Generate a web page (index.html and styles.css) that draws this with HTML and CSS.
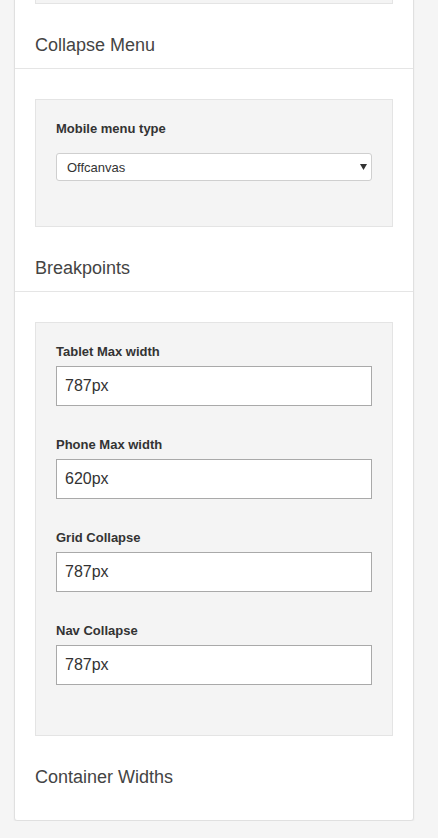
FILE: index.html
```html
<!DOCTYPE html>
<html>
<head>
<meta charset="utf-8">
<link rel="stylesheet" href="styles.css">
</head>
<body>
<div class="card">
  <div class="panel panel-stub"></div>

  <div class="section-title">Collapse Menu</div>
  <div class="panel">
    <div class="group group-select">
      <label class="label">Mobile menu type</label>
      <div class="select">
        <span class="select-text">Offcanvas</span>
        <svg class="caret" width="7" height="6" viewBox="0 0 7 6"><path d="M0 0H7L3.5 6Z" fill="#333"/></svg>
      </div>
    </div>
  </div>

  <div class="section-title">Breakpoints</div>
  <div class="panel">
    <div class="group">
      <label class="label">Tablet Max width</label>
      <div class="input">787px</div>
    </div>
    <div class="group">
      <label class="label">Phone Max width</label>
      <div class="input">620px</div>
    </div>
    <div class="group">
      <label class="label">Grid Collapse</label>
      <div class="input">787px</div>
    </div>
    <div class="group">
      <label class="label">Nav Collapse</label>
      <div class="input">787px</div>
    </div>
  </div>

  <div class="section-title last">Container Widths</div>
</div>
</body>
</html>
```

FILE: styles.css
```css
html, body {
  margin: 0;
  padding: 0;
  background: #f5f5f5;
  font-family: "Liberation Sans", Arial, sans-serif;
  color: #333;
}

.card {
  margin: -30px 0 0 14px;
  width: 400px;
  box-sizing: border-box;
  background: #fff;
  border: 1px solid #e0e0e0;
  border-radius: 3px;
  box-shadow: 0 1px 2px rgba(0, 0, 0, 0.06);
}

.panel {
  margin: 30px 20px 0;
  background: #f4f4f4;
  border: 1px solid #e4e4e4;
  padding: 20px;
}

.panel-stub {
  margin-top: 0;
  padding: 0;
  height: 31px;
}

.section-title {
  padding: 31px 20px 13px;
  font-size: 18px;
  line-height: 20px;
  color: #444;
  border-bottom: 1px solid #e5e5e5;
}

.section-title.last {
  border-bottom: none;
  padding-bottom: 33px;
}

.group {
  margin-bottom: 30px;
}

.label {
  display: block;
  font-size: 13px;
  line-height: 18px;
  font-weight: bold;
  color: #333;
  margin-bottom: 5px;
}

.group-select {
  margin-bottom: 25px;
}

.group-select .label {
  margin-bottom: 15px;
}

.select {
  display: flex;
  align-items: center;
  justify-content: space-between;
  height: 28px;
  box-sizing: border-box;
  background: #fff;
  border: 1px solid #cfcfcf;
  border-radius: 3px;
  padding: 0 4px 0 10px;
  font-size: 13px;
  color: #333;
}

.caret {
  display: block;
}

.input {
  display: flex;
  align-items: center;
  height: 40px;
  box-sizing: border-box;
  background: #fff;
  border: 1px solid #a9a9a9;
  padding: 0 8px;
  font-size: 16px;
  color: #333;
}
```
